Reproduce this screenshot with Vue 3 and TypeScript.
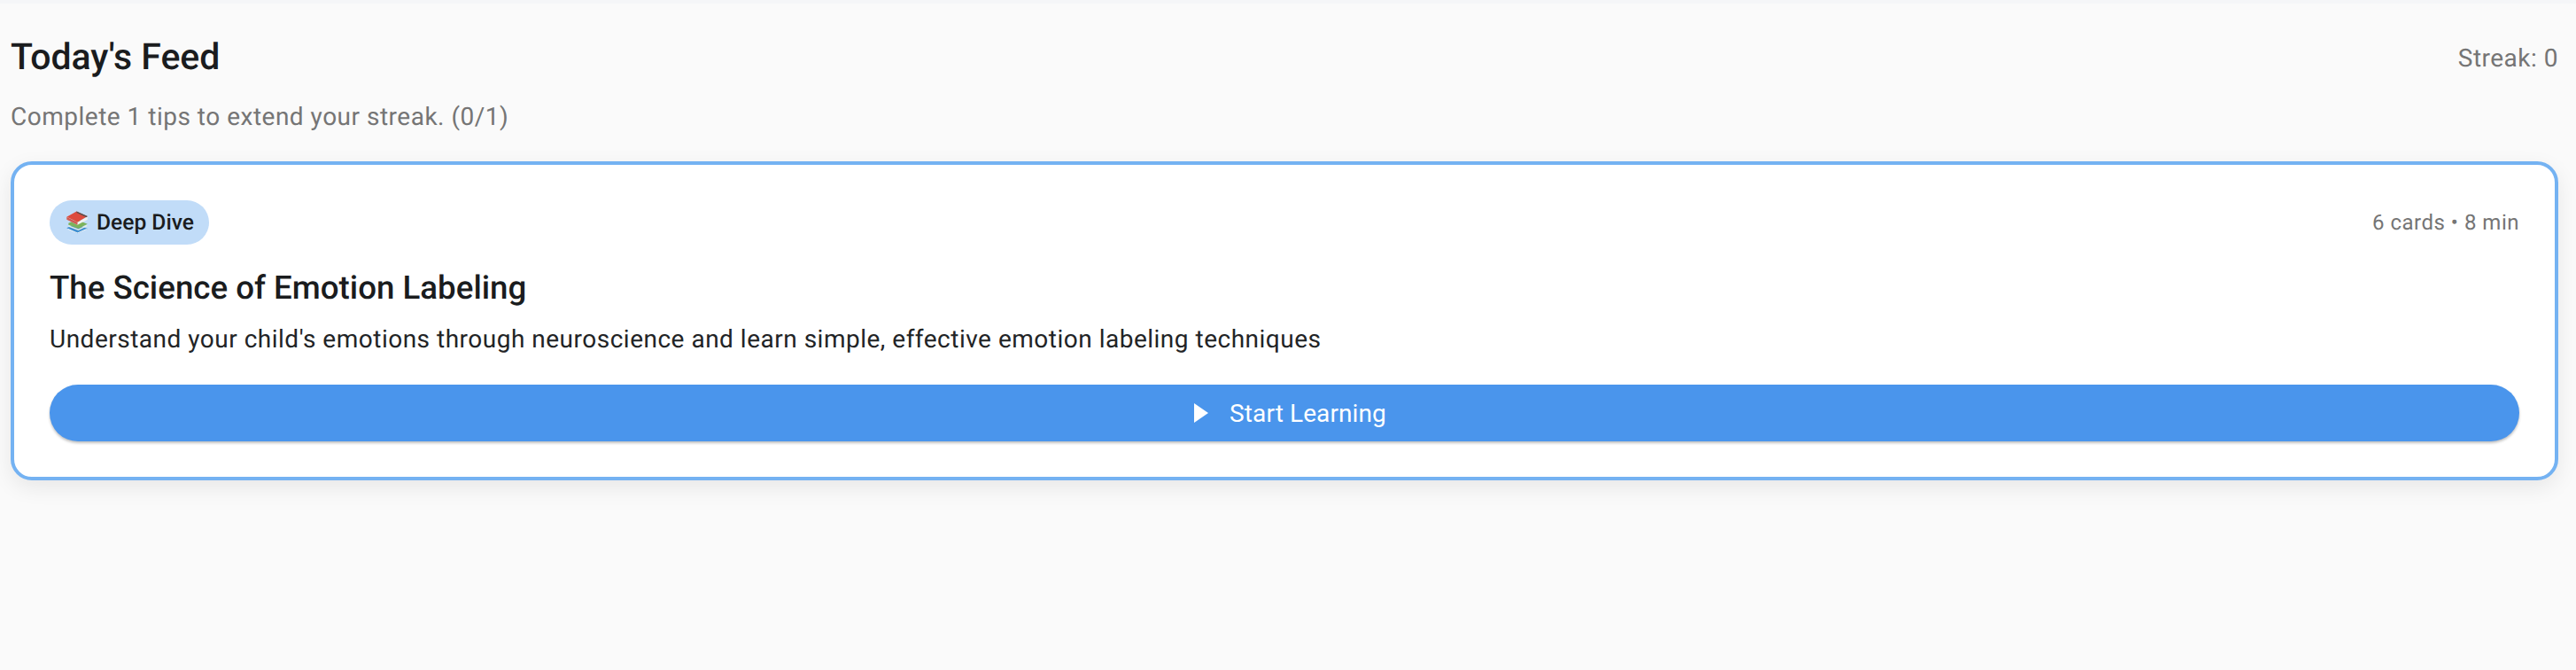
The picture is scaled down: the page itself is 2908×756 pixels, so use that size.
<script setup lang="ts">
const streak = 0;
const goal = 1;
const done = 0;
</script>

<template>
  <div class="page">
    <div class="top-strip"></div>
    <main class="feed">
      <div class="feed-head">
        <h1>Today's Feed</h1>
        <span class="streak">Streak: {{ streak }}</span>
      </div>
      <p class="feed-sub">Complete {{ goal }} tips to extend your streak. ({{ done }}/{{ goal }})</p>

      <section class="card">
        <div class="card-top">
          <span class="chip">
            <svg class="books" viewBox="1.5 0.5 24 25.5" width="26" height="26" aria-hidden="true">
              <path d="M2 19.5 L12 15 L25 20 L14 25.5 Z" fill="#3f8fd2" />
              <path d="M3.5 20 L14 24.5 L24 20 L24 21 L14 25.5 L3.5 21 Z" fill="#f2f5f7" />
              <path d="M4 14 L13 10 L25 15 L15 20 L4 16 Z" fill="#7cb35c" />
              <path d="M4 16.5 L15 20.5 L24.5 16 L24.5 17.5 L15 22 L4 18 Z" fill="#e8efe6" />
              <path d="M2 7 L13 1 L25 6.5 L14 13 Z" fill="#dd4b3e" />
              <path d="M13 1 L25 6.5 L24 7.5 L13 2.5 Z" fill="#55504f" />
              <path d="M2 7 L14 13 L25 7 L25 10 L14 16 L2 10 Z" fill="#f1f1ef" />
              <path d="M2 7 L14 13 L14 16 L2 10 Z" fill="#c9413a" opacity="0.85" />
            </svg>
            Deep Dive
          </span>
          <span class="meta">6 cards • 8 min</span>
        </div>
        <h2>The Science of Emotion Labeling</h2>
        <p class="desc">Understand your child's emotions through neuroscience and learn simple, effective emotion labeling techniques</p>
        <button class="start" type="button">
          <svg class="play" viewBox="0 0 16 22" width="16" height="22" aria-hidden="true">
            <path d="M0 0 L16 11 L0 22 Z" fill="#fff" />
          </svg>
          <span>Start Learning</span>
        </button>
      </section>
    </main>
  </div>
</template>

<style scoped>
.page {
  min-height: 756px;
  background: #fafafa;
  font-family: Roboto, "Liberation Sans", sans-serif;
  text-rendering: geometricPrecision;
  overflow: hidden;
}

.top-strip {
  height: 4px;
  background: #f5f6f8;
}

.feed {
  padding: 26px 20px 0 12px;
}

.feed-head {
  display: flex;
  justify-content: space-between;
  align-items: center;
  height: 70px;
}

h1 {
  margin: 0;
  font-size: 41px;
  font-weight: 500;
  color: #1a1c1e;
}

.streak {
  font-size: 28px;
  color: #757575;
  letter-spacing: 0.5px;
}

.feed-sub {
  margin: 12px 0 0;
  height: 40px;
  line-height: 40px;
  font-size: 28px;
  color: #757575;
  letter-spacing: 0.5px;
}

.card {
  margin-top: 30px;
  height: 360px;
  box-sizing: border-box;
  padding: 40px;
  background: #fff;
  border: 4px solid #74b2f2;
  border-radius: 24px;
  box-shadow: 0 8px 24px rgba(0, 0, 0, 0.08);
}

.card-top {
  display: flex;
  justify-content: space-between;
  align-items: center;
}

.chip {
  display: inline-flex;
  align-items: center;
  gap: 9px;
  height: 50px;
  padding: 0 17px 0 18px;
  border-radius: 25px;
  background: #c1dcf8;
  font-size: 24.6px;
  font-weight: 500;
  color: #1a1c1e;
}

.meta {
  font-size: 24px;
  color: #757575;
  letter-spacing: 0.5px;
}

h2 {
  margin: 26px 0 0;
  font-size: 36.7px;
  line-height: 46px;
  font-weight: 500;
  color: #1a1c1e;
}

.desc {
  margin: 15px 0 0;
  font-size: 28px;
  line-height: 40px;
  color: #222426;
  letter-spacing: 0.5px;
}

.start {
  display: flex;
  align-items: center;
  justify-content: center;
  gap: 24px;
  width: 100%;
  height: 64px;
  margin-top: 31px;
  padding: 0 0 0 13px;
  border: 0;
  border-radius: 32px;
  background: #4a95ec;
  box-shadow: 0 2px 3px rgba(0, 0, 0, 0.25);
  color: #fff;
  font-family: inherit;
  font-size: 28px;
  font-weight: 400;
  letter-spacing: 0.1px;
}

.books,
.play {
  flex: none;
}
</style>

<style>
body {
  background: #fafafa;
}
</style>
